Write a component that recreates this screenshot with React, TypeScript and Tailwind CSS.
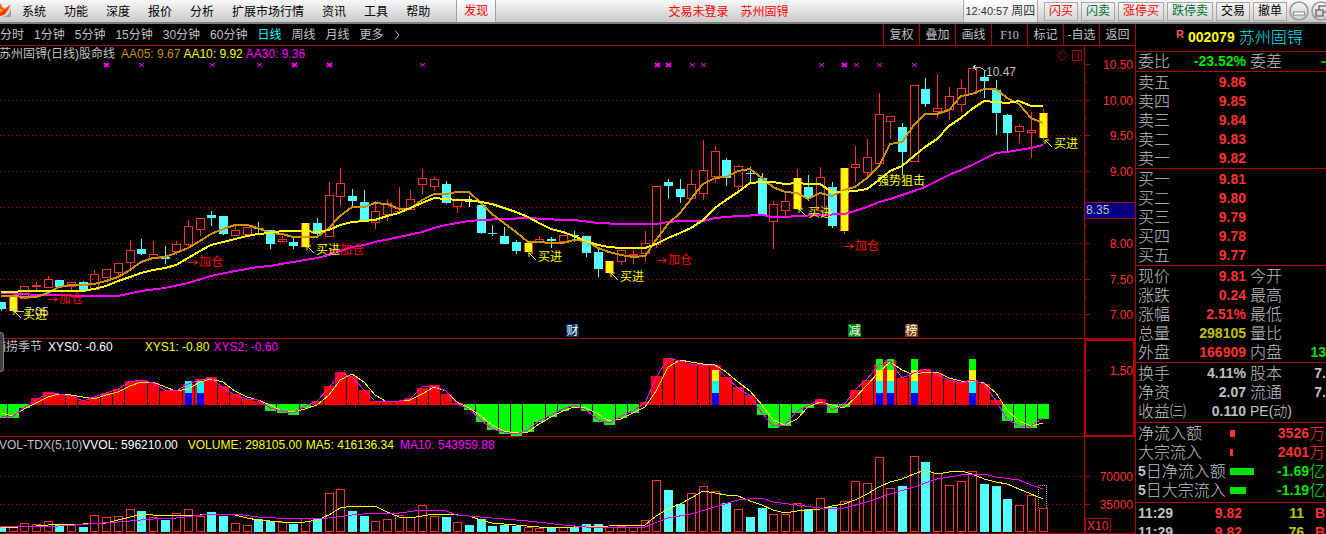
import type { ReactNode } from "react";

const UP = "#ff3232";
const DOWN = "#54ffff";
const LINE = "#b00000";
const STEP = 11.7045;
const cx = (i: number) => Math.round(0.8 + STEP * i);

type Kind = "r" | "c" | "y" | "w";
type Candle = [Kind, number, number, number, number];

// kind, high, body top, body bottom, low
const candles: Candle[] = [
  ["c", 302, 302, 309, 311], ["y", 297, 297, 311, 312], ["r", 286, 286, 299, 299], ["r", 282, 285, 287, 290], ["r", 276, 279, 288, 288],
  ["c", 280, 280, 287, 287], ["r", 282, 282, 287, 290], ["c", 281, 282, 290, 290], ["r", 270, 274, 290, 290], ["r", 269, 269, 278, 278],
  ["r", 263, 263, 273, 276], ["r", 240, 250, 263, 268], ["c", 239, 249, 254, 255], ["r", 241, 254, 259, 259], ["c", 246, 257, 259, 264],
  ["r", 241, 244, 252, 255], ["r", 220, 226, 245, 249], ["r", 218, 218, 230, 236], ["c", 211, 215, 218, 226], ["c", 216, 216, 234, 235],
  ["r", 226, 230, 236, 236], ["r", 227, 227, 235, 235], ["c", 222, 228, 229, 233], ["c", 230, 230, 244, 249], ["r", 236, 239, 242, 243],
  ["c", 238, 242, 246, 249], ["y", 223, 223, 247, 248], ["c", 218, 223, 234, 236], ["r", 182, 195, 237, 237], ["r", 168, 183, 197, 206],
  ["c", 189, 196, 201, 206], ["c", 190, 202, 221, 221], ["r", 201, 211, 223, 229], ["r", 199, 203, 215, 221], ["r", 187, 211, 212, 212],
  ["r", 190, 199, 210, 210], ["r", 169, 178, 185, 194], ["r", 177, 179, 187, 191], ["c", 181, 184, 203, 204], ["r", 198, 200, 207, 213],
  ["w", 196, 201, 202, 207], ["c", 205, 205, 233, 234], ["c", 225, 233, 234, 236], ["c", 227, 236, 244, 244], ["c", 240, 242, 251, 254],
  ["y", 243, 243, 252, 254], ["r", 236, 239, 242, 242], ["c", 237, 239, 241, 248], ["r", 235, 235, 242, 242], ["c", 231, 235, 236, 242],
  ["c", 236, 236, 253, 257], ["c", 249, 252, 269, 277], ["y", 261, 261, 273, 274], ["r", 248, 250, 262, 265], ["r", 250, 254, 256, 264],
  ["r", 231, 243, 254, 262], ["r", 186, 186, 245, 248], ["c", 179, 182, 186, 199], ["c", 179, 189, 197, 203], ["r", 170, 184, 199, 199],
  ["r", 140, 170, 194, 200], ["r", 146, 151, 177, 183], ["c", 158, 160, 178, 186], ["r", 165, 166, 187, 190], ["c", 167, 173, 174, 182],
  ["c", 173, 178, 215, 215], ["r", 201, 204, 222, 249], ["r", 193, 201, 211, 216], ["y", 169, 178, 209, 210], ["c", 175, 187, 198, 201],
  ["r", 167, 177, 211, 211], ["c", 182, 187, 226, 228], ["y", 168, 168, 231, 234], ["r", 146, 164, 168, 182], ["r", 139, 157, 173, 177],
  ["r", 93, 114, 164, 166], ["r", 116, 116, 122, 139], ["c", 123, 127, 152, 175], ["r", 85, 85, 162, 162], ["c", 78, 89, 104, 107],
  ["r", 74, 108, 112, 118], ["r", 87, 96, 110, 120], ["r", 79, 88, 105, 112], ["r", 68, 68, 94, 94], ["c", 70, 77, 81, 98],
  ["c", 80, 90, 113, 135], ["c", 114, 115, 133, 151], ["r", 124, 126, 132, 143], ["r", 112, 130, 133, 158], ["y", 109, 113, 138, 140],
];

const aa05 = [
  296, 296, 297, 297, 293, 287, 285, 285, 284, 281, 277, 270, 262, 258, 257, 253, 248, 241, 234, 229, 225, 225, 228, 233, 234, 237, 237, 237, 228, 216,
  207, 207, 203, 204, 209, 209, 200, 194, 194, 192, 192, 203, 214, 223, 232, 242, 242, 243, 243, 240, 241, 248, 252, 255, 257, 256, 240, 224, 213, 199,
  184, 178, 177, 171, 169, 178, 187, 192, 193, 199, 193, 196, 190, 187, 178, 166, 144, 142, 125, 114, 114, 110, 96, 94, 89, 89, 98, 104, 118, 123,
];
const aa10 = [
  292, 292, 291, 291, 291, 291, 291, 291, 289, 286, 281, 277, 273, 270, 268, 265, 258, 251, 245, 242, 239, 236, 234, 233, 231, 231, 231, 232, 230, 225,
  222, 221, 220, 216, 213, 208, 203, 198, 199, 200, 200, 202, 204, 208, 212, 217, 223, 229, 232, 236, 241, 245, 247, 248, 248, 248, 244, 238, 233, 228,
  220, 208, 200, 192, 183, 182, 182, 184, 183, 184, 184, 192, 192, 191, 189, 180, 171, 166, 156, 147, 139, 126, 118, 109, 101, 102, 103, 101, 106, 106,
];
const aa30: [number, number][] = [
  [0, 293], [2, 294], [3, 295], [5, 295], [7, 296], [10, 296], [12, 291], [14, 288], [16, 283], [18, 276], [20, 271], [22, 267], [23, 266], [25, 262],
  [27, 258], [28, 255], [29, 251], [30, 247], [31, 245], [32, 242], [34, 237], [36, 232], [37, 228], [38, 225], [40, 221], [41, 220], [43, 219], [45, 218],
  [48, 220], [49, 220], [51, 223], [53, 224], [56, 224], [57, 222], [58, 221], [60, 221], [61, 218], [63, 216], [65, 215], [66, 217], [67, 217], [68, 216],
  [70, 215], [72, 214], [73, 211], [74, 207], [75, 202], [76, 199], [77, 195], [78, 191], [79, 187], [80, 181], [81, 175], [82, 170], [83, 165], [84, 159],
  [85, 153], [86, 152], [87, 150], [88, 148], [89, 145],
];

const season = [
  417, 417, 407, 398, 392, 394, 395, 401, 397, 393, 389, 381, 380, 383, 391, 391, 384, 379, 377, 386, 394, 399, 401, 410, 412, 414, 407, 401, 386, 372,
  376, 390, 401, 402, 401, 398, 388, 385, 394, 403, 409, 421, 429, 433, 435, 431, 421, 416, 410, 406, 410, 421, 424, 417, 412, 402, 376, 358, 361, 364,
  365, 365, 377, 387, 395, 414, 427, 425, 412, 407, 399, 412, 406, 390, 380, 364, 360, 378, 375, 369, 373, 380, 382, 380, 384, 400, 420, 427, 427, 418,
];
const xys2 = [
  417, 416, 408, 400, 393, 394, 396, 401, 397, 393, 389, 382, 380, 383, 390, 391, 384, 380, 378, 388, 395, 399, 400, 408, 411, 413, 406, 401, 388, 373,
  377, 390, 401, 402, 401, 399, 387, 386, 391, 404, 409, 420, 429, 432, 434, 430, 421, 415, 409, 405, 410, 420, 423, 416, 411, 403, 378, 358, 361, 364,
  365, 366, 377, 388, 396, 413, 426, 425, 411, 406, 399, 410, 405, 390, 379, 365, 361, 378, 373, 369, 375, 380, 383, 380, 384, 401, 419, 426, 426, 418,
];
const xys1 = [
  413, 416, 409, 403, 397, 394, 395, 397, 399, 395, 392, 386, 382, 382, 387, 391, 389, 382, 379, 382, 391, 397, 400, 405, 411, 412, 409, 405, 395, 380,
  374, 382, 395, 402, 401, 400, 394, 387, 391, 402, 408, 416, 425, 431, 433, 432, 424, 417, 411, 407, 408, 414, 421, 419, 413, 407, 391, 367, 360, 362,
  364, 365, 372, 382, 391, 405, 420, 425, 419, 407, 402, 405, 408, 398, 385, 372, 362, 370, 375, 372, 372, 378, 381, 381, 383, 393, 410, 421, 426, 423,
];
const stacks: [number, number][] = [[16, 2], [17, 2], [61, 3], [75, 4], [76, 4], [78, 4], [83, 4]];
const stackColors = ["#0000ff", "#00ffff", "#ffff00", "#00ff00"];

const volTop = [
  527, 527, 523, 524, 521, 525, 525, 527, 515, 517, 516, 509, 511, 517, 520, 513, 509, 516, 512, 516, 523, 525, 519, 521, 522, 524, 518, 519, 493, 489,
  511, 516, 521, 519, 515, 517, 505, 516, 517, 522, 525, 519, 526, 525, 526, 527, 528, 527, 527, 527, 524, 524, 527, 526, 527, 520, 480, 490, 504, 493,
  486, 491, 503, 509, 517, 508, 514, 514, 503, 509, 498, 507, 501, 481, 483, 457, 488, 486, 456, 462, 473, 485, 481, 471, 484, 486, 499, 505, 495, 508,
];
const volDown = new Set([0, 5, 7, 12, 14, 18, 19, 22, 23, 25, 27, 30, 31, 38, 40, 41, 42, 43, 44, 47, 49, 50, 51, 57, 58, 62, 64, 65, 69, 71, 77, 79, 84, 85, 86]);
const ma5: [number, number][] = [
  [0, 528], [3, 526], [4, 525], [7, 524], [9, 523], [10, 520], [11, 517], [12, 514], [13, 515], [17, 515], [18, 514], [19, 514], [20, 515], [21, 518],
  [22, 520], [23, 521], [24, 522], [25, 523], [26, 522], [27, 520], [28, 515], [29, 508], [30, 506], [32, 506], [33, 512], [34, 517], [35, 518], [36, 516],
  [37, 514], [38, 514], [40, 516], [41, 520], [42, 523], [43, 524], [46, 527], [49, 527], [52, 526], [55, 525], [56, 516], [57, 509], [58, 504], [59, 498],
  [60, 491], [61, 493], [62, 495], [63, 496], [64, 501], [65, 505], [66, 510], [67, 513], [68, 511], [69, 510], [70, 509], [71, 506], [72, 504], [73, 500],
  [74, 494], [75, 487], [76, 482], [77, 479], [78, 474], [79, 470], [80, 474], [81, 472], [82, 471], [83, 474], [84, 479], [85, 482], [86, 484], [87, 489],
  [88, 494], [89, 499],
];
const ma10: [number, number][] = [
  [0, 527], [5, 526], [10, 522], [13, 519], [15, 518], [18, 514], [20, 514], [22, 517], [25, 519], [28, 518], [30, 515], [32, 513], [34, 513], [36, 510],
  [38, 511], [39, 515], [42, 518], [45, 521], [48, 525], [50, 527], [55, 527], [57, 518], [59, 514], [61, 507], [63, 500], [65, 498], [66, 502], [68, 505],
  [70, 508], [72, 508], [74, 502], [76, 494], [78, 487], [80, 479], [82, 475], [84, 474], [85, 477], [87, 480], [88, 485], [89, 489],
];

const crosses: [number, boolean][] = [
  [106, true], [141, false], [212, false], [259, false], [294, true], [329, true], [422, false], [657, true], [668, true], [692, false], [703, false],
  [821, false], [844, true], [856, false], [879, false], [914, false],
];
const buys: [number, number][] = [[23, 315], [316, 250], [538, 257], [620, 277], [808, 213], [1054, 144]];
const adds: [number, number][] = [[48, 299], [188, 262], [329, 250], [657, 260], [844, 246]];
const badges = [
  { x: 566, text: "财", color: "#003366" },
  { x: 848, text: "减", color: "#008000" },
  { x: 905, text: "榜", color: "#804000" },
];

const path = (points: [number, number][]) => points.map(([i, y]) => `${cx(i)},${y}`).join(" ");
const series = (ys: number[]) => path(ys.map((y, i): [number, number] => [i, y]));

function Curve({ points, color, width = 1 }: { points: string; color: string; width?: number }) {
  return <polyline points={points} fill="none" stroke={color} strokeWidth={width} shapeRendering="crispEdges" />;
}

function GridLine({ y }: { y: number }) {
  return <line x1="0" x2="1084" y1={y + 0.5} y2={y + 0.5} stroke="#c00000" strokeDasharray="1 3" />;
}

function AxisLabel({ y, children }: { y: number; children: ReactNode }) {
  return (
    <>
      <line x1="1085" x2="1090" y1={y + 0.5} y2={y + 0.5} stroke={LINE} />
      <text x="1133" y={y + 5} textAnchor="end" fontSize="12" fill={UP}>{children}</text>
    </>
  );
}

function CandleShape({ c, i }: { c: Candle; i: number }) {
  const [kind, high, top, bottom, low] = c;
  const x = cx(i);
  const color = kind === "c" ? DOWN : kind === "w" ? "#ffffff" : UP;
  const h = Math.max(bottom - top, 1);
  return (
    <g>
      {high < top && <rect x={x} y={high} width="1" height={top - high} fill={color} />}
      {low > bottom && <rect x={x} y={bottom} width="1" height={low - bottom} fill={color} />}
      {kind === "r" && h > 1 ? (
        <rect x={x - 3.5} y={top + 0.5} width="8" height={h - 1} fill="none" stroke={color} />
      ) : (
        <rect x={x - 4} y={top} width="9" height={h} fill={color} />
      )}
      {kind === "y" && <rect x={x - 3} y={top} width="7" height={h} fill="#ffff00" />}
    </g>
  );
}

function Panel({ label, top, height, title, children }: { label: string; top: number; height: number; title: ReactNode; children: ReactNode }) {
  return (
    <section className="relative" aria-label={label}>
      <svg viewBox={`0 ${top} 1135 ${height}`} className="block h-auto w-full" shapeRendering="crispEdges">
        <line x1="1084.5" x2="1084.5" y1={top} y2={top + height} stroke={LINE} strokeWidth="1" />
        {children}
        <line x1="0" x2="1135" y1={top + height - 0.5} y2={top + height - 0.5} stroke={LINE} />
      </svg>
      <div className="absolute left-0 top-0 flex h-4 items-center whitespace-nowrap text-[12px] leading-4 text-[#c0c0c0]">{title}</div>
    </section>
  );
}

function PricePanel() {
  return (
    <Panel
      label="日线"
      top={46}
      height={293}
      title={
        <>
          <span className="-ml-px">苏州固锝(日线)</span>
          <span className="mr-1.5">股命线</span>
          <span className="mr-[3px] text-[#d09000]">AA05: 9.67</span>
          <span className="mr-[3px] text-[#ffff00]">AA10: 9.92</span>
          <span className="text-[#ff00ff]">AA30: 9.36</span>
        </>
      }
    >
      {[100, 135, 171, 207, 243, 279, 314].map((y) => <GridLine key={y} y={y} />)}
      {crosses.map(([x, big]) => (
        <path key={x} d={`M${x - 2} 63l5 4M${x - 2} 67l5 -4`} stroke="#ff00ff" strokeWidth={big ? 2 : 1} shapeRendering="auto" />
      ))}
      {candles.map((c, i) => <CandleShape key={i} c={c} i={i} />)}
      <Curve points={path(aa30)} color="#ff00ff" width={2} />
      <Curve points={series(aa05)} color="#d09000" width={2} />
      <Curve points={series(aa10)} color="#ffff00" width={2} />
      {adds.map(([x, y]) => (
        <g key={x} fill="#ff0000">
          <path d={`M${x} ${y + 0.5}h9M${x + 6} ${y - 2}l3 2.5l-3 2.5`} fill="none" stroke="#ff0000" />
          <text x={x + 11} y={y + 4} fontSize="12">加仓</text>
        </g>
      ))}
      <g fontSize="12" fill="#c0c0c0">
        <path d="M13 311.5h11M13 311l3 -2" stroke="#c0c0c0" />
        <text x="25" y="316">7.05</text>
        <path d="M973 67l8 1l5 3M973 67l3 -2M973 67l3 3" fill="none" stroke="#c0c0c0" />
        <text x="986" y="76">10.47</text>
      </g>
      {buys.map(([x, y]) => (
        <g key={x} fill="#ffff00">
          <path d={`M${x - 9} ${y - 4}l7 7M${x - 9} ${y}v-4h4`} fill="none" stroke="#ffff00" shapeRendering="auto" />
          <text x={x} y={y + 4} fontSize="12">买进</text>
        </g>
      ))}
      <text x="877" y="185" fontSize="12" fill="#ffff00">强势狙击</text>
      {badges.map((b) => (
        <g key={b.x}>
          <rect x={b.x} y="324" width="13" height="13" fill={b.color} />
          <text x={b.x + 0.5} y="335" fontSize="12" fill="#ffffff">{b.text}</text>
        </g>
      ))}
      <g fill="none" stroke={LINE} shapeRendering="auto">
        <path d="M1062.5 50.5l5 5l-5 5l-5 -5z" />
        <path d="M1072.5 50.5h9v10h-9zM1078.5 50.5v10" />
      </g>
      {[82, 118, 153, 189, 225, 261, 297].map((y) => (
        <line key={y} x1="1085" x2="1087" y1={y + 0.5} y2={y + 0.5} stroke={LINE} />
      ))}
      <AxisLabel y={64}>10.50</AxisLabel>
      <AxisLabel y={100}>10.00</AxisLabel>
      <AxisLabel y={135}>9.50</AxisLabel>
      <AxisLabel y={171}>9.00</AxisLabel>
      <AxisLabel y={243}>8.00</AxisLabel>
      <AxisLabel y={279}>7.50</AxisLabel>
      <AxisLabel y={314}>7.00</AxisLabel>
      <rect x="1085" y="202" width="50" height="17" fill="#000080" />
      <path d="M1085 202.5h50M1085 218.5h50" stroke={LINE} />
      <text x="1086" y="214" fontSize="12" fill="#c0c0c0">8.35</text>
    </Panel>
  );
}

function SeasonPanel() {
  return (
    <Panel
      label="捕捞季节"
      top={339}
      height={98}
      title={
        <>
          <span className="-ml-1.5 mr-1.5">捕捞季节</span>
          <span className="mr-8 text-white">XYS0: -0.60</span>
          <span className="mr-1 text-[#ffff00]">XYS1: -0.80</span>
          <span className="text-[#ff00ff]">XYS2: -0.60</span>
        </>
      }
    >
      <GridLine y={370} />
      {season.map((y, i) => (
        <rect key={i} x={cx(i) - 5} y={Math.min(y, 404)} width="11" height={Math.abs(y - 404) + 1} fill={y < 404 ? "#ff0000" : "#00ff00"} />
      ))}
      {stacks.map(([i, n]) =>
        stackColors.slice(0, n).map((color, k) => (
          <rect key={`${i}-${k}`} x={cx(i) - 3} y={393 - [0, 12, 23, 34][k]} width="7" height={k > 1 ? 11 : 12} fill={color} />
        )),
      )}
      <Curve points={series(xys1)} color="#ffff00" />
      <Curve points={series(xys2)} color="#ff00ff" />
      <AxisLabel y={370}>1.50</AxisLabel>
      <rect x="1085" y="340" width="49" height="96" fill="none" stroke={LINE} strokeWidth="2" />
    </Panel>
  );
}

function VolumePanel() {
  return (
    <Panel
      label="成交量"
      top={437}
      height={97}
      title={
        <>
          <span className="-ml-px">VOL-TDX(5,10)</span>
          <span className="mr-2.5 text-white">VVOL: 596210.00</span>
          <span className="mr-1 text-[#ffff00]">VOLUME: 298105.00</span>
          <span className="mr-1.5 text-[#ffff00]">MA5: 416136.34</span>
          <span className="text-[#ff00ff]">MA10: 543959.88</span>
        </>
      }
    >
      <GridLine y={476} />
      <GridLine y={504} />
      {volTop.map((y, i) =>
        volDown.has(i) ? (
          <rect key={i} x={cx(i) - 4} y={y} width="9" height={532 - y} fill={DOWN} />
        ) : (
          <rect key={i} x={cx(i) - 3.5} y={y + 0.5} width="8" height={531 - y} fill="none" stroke={UP} />
        ),
      )}
      <path d="M1038.5 508V485.5h8V508" fill="none" stroke="#c0c000" strokeDasharray="1 1" />
      <Curve points={path(ma5)} color="#ffff00" />
      <Curve points={path(ma10)} color="#ff00ff" />
      <line x1="1085" x2="1087" y1="490.5" y2="490.5" stroke={LINE} />
      <AxisLabel y={476}>70000</AxisLabel>
      <AxisLabel y={504}>35000</AxisLabel>
      <rect x="1085.5" y="518.5" width="25" height="15" fill="none" stroke={LINE} />
      <text x="1087" y="530" fontSize="12" fill={UP}>X10</text>
    </Panel>
  );
}

const menus = ["系统", "功能", "深度", "报价", "分析", "扩展市场行情", "资讯", "工具", "帮助"];
const orders = [
  { text: "闪买", cls: "text-[#ff0000]" },
  { text: "闪卖", cls: "text-[#007030]" },
  { text: "涨停买", cls: "text-[#ff0000]" },
  { text: "跌停卖", cls: "text-[#007030]" },
  { text: "交易", cls: "text-black" },
  { text: "撤单", cls: "text-black" },
];

function TitleBar() {
  return (
    <header className="flex h-6 shrink-0 items-stretch overflow-hidden whitespace-nowrap border-b-2 border-[#808080] bg-gradient-to-b from-[#f8f8f8] to-[#cacaca] text-[12px] text-black">
      <svg viewBox="0 0 12 22" className="h-[22px] w-3 shrink-0" aria-hidden="true">
        <path d="M0 7h11v10H0z" fill="#dcd6d4" />
        <path d="M11 9v8H3l5 -2z" fill="#a09c9c" />
        <path d="M0 5l1 -2l1 4l3 2l6 -5l-3 6l-4 5l-4 1z" fill="#ff5a08" />
        <path d="M0 12l4 -1l5 -5l-4 8l-5 2z" fill="#e83800" />
        <path d="M0 9l3 1l-3 3z" fill="#ffa040" />
      </svg>
      <nav className="ml-2.5 flex items-center gap-[18px] pt-px">
        {menus.map((m) => <button key={m} type="button">{m}</button>)}
      </nav>
      <button type="button" className="ml-[26px] w-10 shrink-0 border-x border-[#a0a0a0] bg-gradient-to-b from-white to-[#dedede] text-[#ff0000]">发现</button>
      <div className="flex flex-1 items-center justify-center gap-3 pr-0.5 pt-px text-[#ff0000]">
        <span>交易未登录</span>
        <span>苏州固锝</span>
      </div>
      <div className="flex w-[75px] shrink-0 items-center justify-center gap-[3px] border-x border-[#a8a8a8] bg-gradient-to-b from-white to-[#e0e0e0] text-[#333333]">
        <time className="text-[11px]">12:40:57</time>
        <span>周四</span>
      </div>
      <div className="ml-1.5 flex shrink-0 items-center gap-[3px]">
        {orders.map((o) => (
          <button key={o.text} type="button" className={`h-[19px] border border-[#a8a8a8] bg-gradient-to-b from-[#f4f4f4] to-[#d4d4d4] px-1 leading-4 ${o.cls}`}>{o.text}</button>
        ))}
      </div>
      <div className="ml-0.5 flex w-[37px] shrink-0 items-center gap-0.5 overflow-hidden">
        <button type="button" aria-label="最小化" className="shrink-0">
          <svg viewBox="0 0 20 20" className="block size-5" fill="none">
            <circle cx="10" cy="10" r="9" stroke="#999999" strokeWidth="1.6" />
            <rect x="4.5" y="11" width="11" height="3" fill="#ffffff" stroke="#888888" />
          </svg>
        </button>
        <button type="button" aria-label="还原" className="shrink-0">
          <svg viewBox="0 0 20 20" className="block size-5" fill="none">
            <circle cx="10" cy="10" r="9" stroke="#999999" strokeWidth="1.6" />
            <path d="M8 9V5h8v6h-4M5 9h7v6H5z" stroke="#777777" strokeWidth="1.6" />
          </svg>
        </button>
      </div>
    </header>
  );
}

const periods = ["分时", "1分钟", "5分钟", "15分钟", "30分钟", "60分钟", "日线", "周线", "月线", "更多"];
const tools = ["复权", "叠加", "画线", "F10", "标记", "-自选", "返回"];

function Toolbar() {
  return (
    <div className="flex h-[22px] items-stretch overflow-hidden whitespace-nowrap border-b border-[#b00000] text-[12px] text-[#c0c0c0]">
      <div className="flex flex-1 items-center gap-2.5">
        {periods.map((p) => (
          <button key={p} type="button" className={p === "日线" ? "text-[#00ffff]" : ""}>{p}</button>
        ))}
        <button type="button" aria-label="更多周期" className="-ml-1">
          <svg viewBox="0 0 6 10" className="ml-1 h-2.5 w-1.5" fill="none"><path d="M1 0.5l4 4.5l-4 4.5" stroke="#c0c0c0" /></svg>
        </button>
      </div>
      {tools.map((t) => (
        <button key={t} type="button" className={`w-9 shrink-0 border-l border-[#b00000] ${t === "F10" ? "font-['Liberation_Serif',serif]" : ""}`}>{t}</button>
      ))}
    </div>
  );
}

type Quote = [string, string, string, string?, string?, string?];
const red = "text-[#ff3232]";
const green = "text-[#00e600]";
const gray = "text-[#c0c0c0]";
const gold = "text-[#c0c000]";

function QuoteTable({ rows, className = "" }: { rows: Quote[]; className?: string }) {
  return (
    <div className={`border-b border-[#b00000] ${className}`}>
      <table className="w-full table-fixed border-collapse">
        <colgroup>
          <col className="w-[50px]" />
          <col className="w-[60px]" />
          <col className="w-[50px]" />
          <col />
        </colgroup>
        <tbody>
          {rows.map(([label, value, color, label2, value2, color2]) => (
            <tr key={label} className="h-[19px]">
              <th scope="row" className="p-0 pl-0.5 text-left font-light">{label}</th>
              <td className={`p-0 text-right text-[14px] font-bold ${color}`}>{value}</td>
              <th scope="row" className={`p-0 pl-1 text-left font-light ${label2?.startsWith("PE") ? "text-[14px]" : ""}`}>{label2}</th>
              <td className={`p-0 text-right text-[14px] font-bold ${color2 ?? ""}`}>{value2}</td>
            </tr>
          ))}
        </tbody>
      </table>
    </div>
  );
}

const flows = [
  { label: "净流入额", num: "3526", unit: "万", cls: red, bar: "w-[5px] bg-[#ff3232]" },
  { label: "大宗流入", num: "2401", unit: "万", cls: red, bar: "w-[3px] bg-[#ff3232]" },
  { label: "5日净流入额", num: "-1.69", unit: "亿", cls: green, bar: "w-6 bg-[#00e600]" },
  { label: "5日大宗流入", num: "-1.19", unit: "亿", cls: green, bar: "w-4 bg-[#00e600]" },
];
const ticks = [["11:29", "9.82", "11"], ["11:29", "9.82", "76"]];

function FlowLabel({ text }: { text: string }) {
  const dated = text.startsWith("5");
  return (
    <span className="flex h-[19px] items-center">
      {dated && <b className="text-[14px] font-bold">5</b>}
      {dated ? text.slice(1) : text}
    </span>
  );
}

function Sidebar() {
  return (
    <aside className="w-[191px] shrink-0 overflow-hidden whitespace-nowrap border-l border-[#b00000] text-[16px] leading-[19px] text-[#c0c0c0]">
      <h1 className="flex h-7 items-center border-b border-[#b00000] pl-10 font-light">
        <sup className="-top-1 mr-1 text-[11px] font-bold text-[#ff5050]">R</sup>
        <span className="mr-1 text-[14px] font-bold text-[#ffff00]">002079</span>
        <span className="text-[#00e0f0]">苏州固锝</span>
      </h1>
      <QuoteTable rows={[["委比", "-23.52%", green, "委差", "-", green]]} />
      <QuoteTable rows={[["卖五", "9.86", red], ["卖四", "9.85", red], ["卖三", "9.84", red], ["卖二", "9.83", red], ["卖一", "9.82", red]]} className="pt-px" />
      <QuoteTable rows={[["买一", "9.81", red], ["买二", "9.80", red], ["买三", "9.79", red], ["买四", "9.78", red], ["买五", "9.77", red]]} className="pt-px" />
      <QuoteTable
        rows={[
          ["现价", "9.81", red, "今开"],
          ["涨跌", "0.24", red, "最高"],
          ["涨幅", "2.51%", red, "最低"],
          ["总量", "298105", gold, "量比"],
          ["外盘", "166909", red, "内盘", "13", green],
        ]}
        className="pt-px"
      />
      <QuoteTable rows={[["换手", "4.11%", gray, "股本", "7.", gray], ["净资", "2.07", gray, "流通", "7.", gray], ["收益㈢", "0.110", gray, "PE(动)"]]} className="py-px" />
      <div className="border-b border-[#b00000] pb-0.5 pt-px">
        <table className="w-full table-fixed border-collapse">
          <colgroup>
            <col className="w-[94px]" />
            <col className="w-[30px]" />
            <col />
          </colgroup>
          <tbody>
            {flows.map((f) => (
              <tr key={f.label} className="h-[19px]">
                <th scope="row" className="p-0 pl-0.5 text-left font-light"><FlowLabel text={f.label} /></th>
                <td className="p-0"><div className={`h-[7px] ${f.bar}`} /></td>
                <td className={`p-0 pr-px font-light ${f.cls}`}>
                  <span className="flex h-[19px] items-center justify-end">
                    <b className="text-[14px] font-bold">{f.num}</b>
                    {f.unit}
                  </span>
                </td>
              </tr>
            ))}
          </tbody>
        </table>
      </div>
      <table className="mt-px w-full table-fixed border-collapse text-[14px] font-bold">
        <tbody>
          {ticks.map(([time, price, lots]) => (
            <tr key={lots} className="h-[19px]">
              <td className="w-[50px] p-0 pl-0.5">{time}</td>
              <td className="w-[56px] p-0 text-right text-[#ff3232]">{price}</td>
              <td className="w-[62px] p-0 text-right text-[#c0c000]">{lots}</td>
              <td className="p-0 pr-px text-right text-[#ff3232]">B</td>
            </tr>
          ))}
        </tbody>
      </table>
    </aside>
  );
}

export default function App() {
  return (
    <div className="flex h-screen flex-col overflow-hidden bg-black font-['Liberation_Sans','Noto_Sans_CJK_SC',sans-serif]">
      <TitleBar />
      <div className="flex min-h-0 flex-1">
        <main className="relative min-w-0 flex-1">
          <Toolbar />
          <PricePanel />
          <SeasonPanel />
          <VolumePanel />
          <div className="absolute left-0 top-[308px] h-10 w-1 rounded-r-lg border border-l-0 border-[#808080] bg-[#404040]" />
        </main>
        <Sidebar />
      </div>
    </div>
  );
}
